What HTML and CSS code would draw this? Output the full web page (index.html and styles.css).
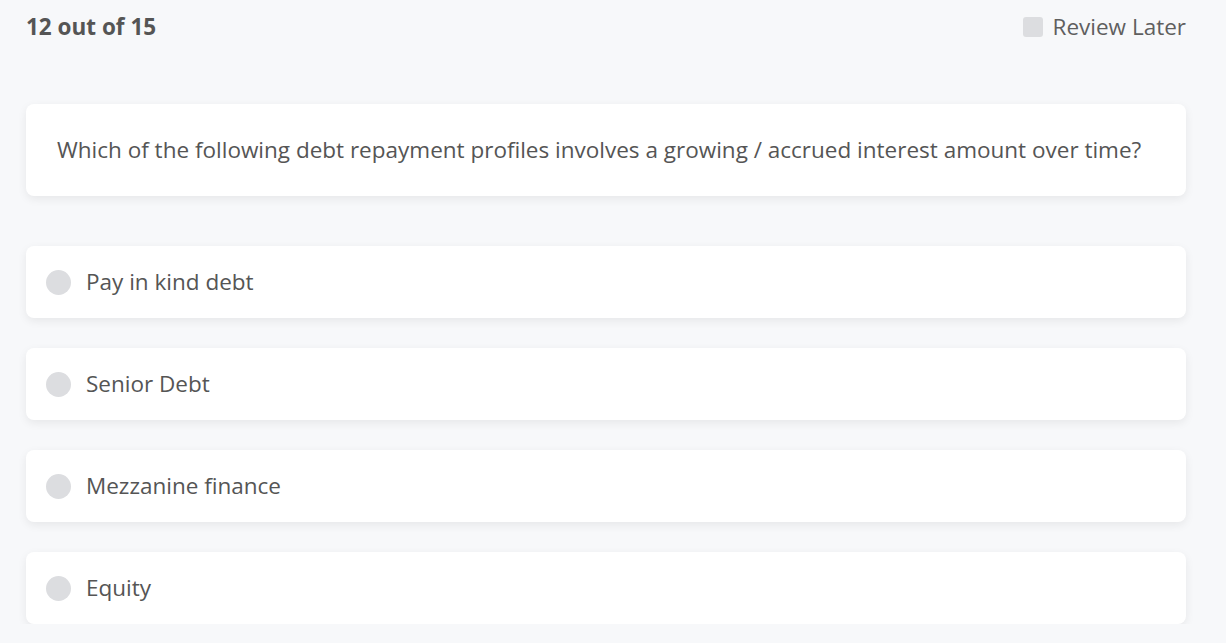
FILE: index.html
```html
<!DOCTYPE html>
<html>
<head>
<meta charset="utf-8">
<link rel="stylesheet" href="styles.css">
</head>
<body>
<div class="page">
  <div class="header">
    <div class="progress">12 out of 15</div>
    <label class="review"><span class="box"></span><span>Review Later</span></label>
  </div>
  <div class="question">Which of the following debt repayment profiles involves a growing / accrued interest amount over time?</div>
  <div class="options">
    <div class="option"><span class="radio"></span><span>Pay in kind debt</span></div>
    <div class="option"><span class="radio"></span><span>Senior Debt</span></div>
    <div class="option"><span class="radio"></span><span>Mezzanine finance</span></div>
    <div class="option"><span class="radio"></span><span>Equity</span></div>
  </div>
</div>
</body>
</html>
```
FILE: styles.css
```css
html, body {
  margin: 0;
  padding: 0;
  background: #f7f8fa;
}
body {
  font-family: "Open Sans", "Liberation Sans", sans-serif;
  color: #555555;
}
.page {
  padding: 0 40px 0 26px;
}
.header {
  display: flex;
  justify-content: space-between;
  align-items: center;
  height: 53px;
  padding-bottom: 1px;
  box-sizing: border-box;
}
.progress {
  font-weight: 700;
  font-size: 22.5px;
  color: #555555;
}
.review {
  display: flex;
  align-items: center;
  gap: 10px;
  font-size: 22.5px;
  color: #5f5f5f;
}
.box {
  width: 20px;
  height: 20px;
  border-radius: 3px;
  background: #dcdde0;
  position: relative;
  top: 1px;
}
.question {
  margin-top: 51px;
  background: #fff;
  border-radius: 8px;
  box-shadow: 0 3px 10px rgba(0, 0, 0, 0.07);
  height: 92px;
  box-sizing: border-box;
  padding: 0 31px 2px;
  display: flex;
  align-items: center;
  font-size: 22.5px;
}
.options {
  margin-top: 50px;
  display: flex;
  flex-direction: column;
  gap: 30px;
}
.option {
  background: #fff;
  border-radius: 8px;
  box-shadow: 0 3px 10px rgba(0, 0, 0, 0.07);
  height: 72px;
  box-sizing: border-box;
  padding: 0 21px 2px 21px;
  display: flex;
  align-items: center;
  gap: 15px;
  font-size: 22.5px;
}
.radio {
  width: 25px;
  height: 25px;
  border-radius: 50%;
  background: #dcdde0;
  flex: none;
  margin-left: -1px;
  position: relative;
  top: 1px;
}
```
